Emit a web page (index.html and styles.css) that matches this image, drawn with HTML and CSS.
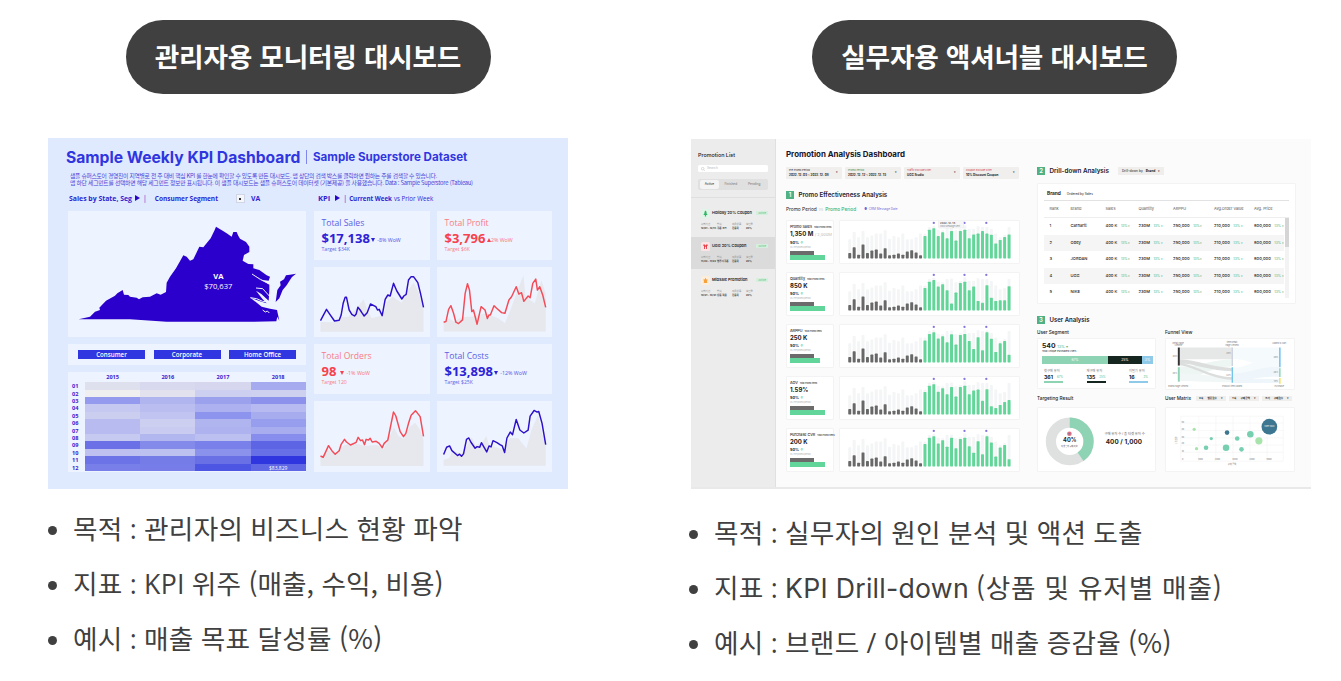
FILE: index.html
```html
<!DOCTYPE html>
<html lang="ko">
<head>
  <meta charset="UTF-8" />
  <title>대시보드 유형</title>
  <link rel="stylesheet" href="styles.css">
</head>
<body>

  <section class="column monitor">
    <h2 class="pill">관리자용 모니터링 대시보드</h2>

    <div class="weekly">
      <div class="weekly-title"><b>Sample Weekly KPI Dashboard</b><i></i><strong>Sample Superstore Dataset</strong></div>
      <div class="weekly-desc">
        <p class="d1">샘플 슈퍼스토어 경영진이 지역별로 전 주 대비 핵심 KPI 를 한눈에 확인할 수 있도록 만든 대시보드. 맵 상단의 검색 박스를 클릭하면 원하는 주를 검색할 수 있습니다.</p>
        <p class="d2">맵 하단 세그먼트를 선택하면 해당 세그먼트 정보만 표시됩니다. 이 샘플 대시보드는 샘플 슈퍼스토어 데이터셋 (기본제공) 을 사용했습니다. Data : Sample Superstore (Tableau)</p>
      </div>
      <div class="weekly-labels">
        <div class="label-left"><b>Sales by State, Seg</b><span class="play"></span><span class="bar">|</span><b class="seg">Consumer Segment</b><span class="drop"></span><b>VA</b></div>
        <div class="label-right"><b class="kpi">KPI</b><span class="play"></span><span class="bar">|</span><b class="cw">Current Week</b><span class="pw">vs Prior Week</span></div>
      </div>

      <div class="weekly-body">
        <div class="stack">
          <div class="tile map">
            <svg viewBox="84 243 714 378">
              <path fill="#2b00cc" d="M116 568L150 560L165 545L180 540L178 533L198 512L225 497L232 490L248 480L252 494L265 495L270 500L290 503L297 508L308 502L330 500L350 490L362 494L378 486L380 458L390 440L408 415L422 390L430 376L440 380L450 392L460 388L478 350L490 352L512 325L524 300L528 290L548 302L560 310L575 320L580 306L590 306L594 316L600 326L618 336L628 350L628 366L612 375L608 392L625 402L640 403L640 415L658 420L680 436L690 440L686 452L668 450L636 432L660 446L688 464L688 480L687 497L686 512L664 492L648 482L668 508L680 520L660 514L631 503L665 530L690 536L711 540L718 572L712 560L709 574L640 575L380 575L270 568Z"/>
              <path fill="#2b00cc" d="M768 431L756 441L750 450L740 466L728 480L718 505L707 516L712 480L722 466L720 455L732 448L738 436L750 434Z"/>
              <path d="M668 540L676 546L682 543L688 549M636 432L662 449L686 461M648 474L668 476L688 498M631 503L650 506L668 514L684 516" stroke="#edf3ff" stroke-width="3" fill="none"/>
              <text x="535" y="447" class="map-name">VA</text>
              <text x="535" y="476" class="map-value">$70,637</text>
            </svg>
          </div>
          <div class="tile segments"><span>Consumer</span><span>Corporate</span><span>Home Office</span></div>
          <div class="tile heat" id="heat"></div>
        </div>

        <div class="kpis">
          <div class="tile kpi-card blue">
            <h4>Total Sales</h4>
            <div class="num">$17,138<i class="down"></i><small>-8% WoW</small></div>
            <p>Target $34K</p>
          </div>
          <div class="tile kpi-card red">
            <h4>Total Profit</h4>
            <div class="num">$3,796<i class="up"></i><small>2% WoW</small></div>
            <p>Target $6K</p>
          </div>
          <div class="tile">
            <svg viewBox="27 411 347 210" class="line blue-line">
              <path class="area" d="M46 605V576L88 577L108 562L130 560L155 535L175 508L186 540L200 565L235 555L245 515L262 500L290 518L305 485L325 458L340 485L355 540V605Z"/>
              <polyline points="46,572 64,538 72,550 88,573 102,571 108,555 114,520 120,502 124,502 132,540 140,553 148,558 153,552 158,532 165,540 170,548 177,558 186,548 196,522 212,530 217,540 222,538 231,557 240,508 248,495 255,498 265,460 275,483 290,507 296,498 303,493 310,450 318,440 325,440 338,458 346,490 355,532"/>
            </svg>
          </div>
          <div class="tile">
            <svg viewBox="395 411 347 210" class="line red-line">
              <path class="area" d="M415 605V580L432 566L445 575L470 562L500 560L540 550L580 565L600 580L615 545L640 475L656 435L662 500L690 520L710 450L723 490V605Z"/>
              <polyline points="415,577 422,575 430,538 437,527 445,550 452,577 460,581 472,570 480,490 487,461 493,480 500,545 505,540 516,583 528,530 540,540 547,566 552,555 556,555 567,527 575,535 590,548 600,550 612,510 620,500 634,470 642,492 650,488 657,514 670,498 676,503 684,460 693,447 698,480 705,470 714,495 723,532"/>
            </svg>
          </div>
          <div class="tile kpi-card red">
            <h4>Total Orders</h4>
            <div class="num">98<i class="down gap"></i><small>-1% WoW</small></div>
            <p>Target 120</p>
          </div>
          <div class="tile kpi-card blue">
            <h4>Total Costs</h4>
            <div class="num">$13,898<i class="down"></i><small>-12% WoW</small></div>
            <p>Target $25K</p>
          </div>
          <div class="tile">
            <svg viewBox="27 273 347 213" class="line red-line">
              <path class="area" d="M46 468V440L70 420L88 434L118 405L150 400L180 408L215 405L235 418L250 388L266 352L280 378L296 388L312 352L330 338L345 360L355 390V468Z"/>
              <polyline points="46,438 54,442 70,407 80,422 90,433 102,422 108,403 118,388 124,396 136,405 153,397 159,382 166,392 172,390 178,404 183,388 190,390 195,385 201,396 213,394 222,400 231,413 237,400 248,390 256,350 265,306 272,318 285,365 295,380 302,370 310,340 318,316 331,302 345,320 355,379"/>
            </svg>
          </div>
          <div class="tile">
            <svg viewBox="395 273 347 213" class="line blue-line">
              <path class="area" d="M415 468V450L432 445L440 425L470 430L490 400L500 382L510 405L530 400L544 378L552 405L598 420L615 385L640 385L665 416L680 360L700 315L712 370L723 405V468Z"/>
              <polyline points="415,434 424,412 433,408 440,422 457,437 463,433 469,439 475,432 484,388 491,384 497,396 510,415 516,410 524,412 529,398 545,426 552,408 558,411 564,392 576,398 585,404 592,408 599,428 606,384 616,366 623,374 634,328 645,360 657,369 670,360 676,318 688,301 697,306 702,304 712,340 723,404"/>
            </svg>
          </div>
        </div>
      </div>
    </div>

    <ul class="points">
      <li>목적 : 관리자의 비즈니스 현황 파악</li>
      <li>지표 : KPI 위주 <span class="paren">(매출, 수익, 비용)</span></li>
      <li>예시 : 매출 목표 달성률 <span class="paren rate">(%)</span></li>
    </ul>
  </section>

  <section class="column action">
    <h2 class="pill">실무자용 액셔너블 대시보드</h2>

    <div class="promo">
      <aside>
        <div class="aside-top">
          <h3>Promotion List</h3>
          <div class="search"><svg viewBox="0 0 10 10"><circle cx="4.3" cy="4.3" r="3.3"/><path d="M7 7L9.5 9.5"/></svg>Search</div>
          <div class="tabs"><span class="on">Active</span><span>Finished</span><span>Pending</span></div>
        </div>
        <div class="item">
          <div class="item-head"><svg viewBox="0 0 30 30"><rect width="30" height="30" rx="5" fill="#dff5e6"/><path fill="#35b568" d="M15 5l5 7h-3l5 8h-5v5h-4v-5H8l5-8h-3z"/></svg><b>Holiday 20% Coupon</b><em>Active</em></div>
          <div class="meta"><span>시행기간</span><span>방식</span><span>적용상품</span><span>할인율</span><b>12/01 - 12/15</b><b>쿠폰 코드</b><b>전품목</b><b>20%</b></div>
        </div>
        <div class="item on">
          <div class="item-head"><svg viewBox="0 0 30 30"><rect width="30" height="30" rx="5" fill="#fbe4e4"/><path fill="#e23d48" d="M8 8h5v3h4V8h5v5h-2v10h-3v-7h-4v7h-3V13H8z"/></svg><b>UGG 20% Coupon</b><em>Active</em></div>
          <div class="meta"><span>시행기간</span><span>방식</span><span>적용상품</span><span>할인율</span><b>11/23 - 11/23</b><b>앱푸시쿠폰</b><b>전품목</b><b>20%</b></div>
        </div>
        <div class="item">
          <div class="item-head"><svg viewBox="0 0 30 30"><rect width="30" height="30" rx="5" fill="#fdeedb"/><path fill="#f7a13d" d="M15 6l3 6h5l-3 5 1 6H9l1-6-3-5h5z"/></svg><b>MidSale Promotion</b><em>Active</em></div>
          <div class="meta"><span>시행기간</span><span>방식</span><span>적용상품</span><span>할인율</span><b>10/21 - 10/31</b><b>상품 적용</b><b>전품목</b><b>20%</b></div>
        </div>
      </aside>

      <main>
        <div class="left">
          <h1>Promotion Analysis Dashboard</h1>
          <div class="filters">
            <div><span>Pre Promo Period</span><b>2022. 12. 05 ~ 2022. 12. 08</b></div>
            <div class="g"><span>Promo Period</span><b>2022. 12. 12 ~ 2022. 12. 15</b></div>
            <div class="r"><span>Traffic Exclude Filter</span><b>UGG Studio</b></div>
            <div class="r"><span>Coupon Exclude Filter</span><b>10% Discount Coupon</b></div>
          </div>
          <h2 class="section s1"><i>1</i>Promo Effectiveness Analysis</h2>
          <div class="legend"><span>Promo Period</span><em>vs</em><b>Promo Period</b><small>● &nbsp;CRM Message Date</small></div>
          <div class="effects" id="effects"></div>
        </div>

        <div class="right">
          <div class="drill-head"><h2 class="section s2"><i>2</i>Drill-down Analysis</h2><div class="select">Drill-down by <b>Brand</b> <span>▾</span></div></div>
          <div class="card drill">
            <div class="drill-top"><b>Brand</b><span>Ordered by Sales</span></div>
            <div class="tr th"><span>Rank</span><span>Brand</span><span>Sales</span><span>Quantity</span><span>ARPPU</span><span>Avg.Order Value</span><span>Avg. Price</span></div>
            <div class="table-body">
              <div id="rows"></div>
              <div class="scroll"><i></i></div>
            </div>
          </div>

          <h2 class="section s3"><i>3</i>User Analysis</h2>
          <div class="users">
            <div>
              <h5>User Segment</h5>
              <div class="card seg-card">
                <div class="total">540 <em>13% ▾</em></div>
                <p>Total Unique Purchased Users</p>
                <div class="split"><span>67%</span><span>25%</span><span>3%</span></div>
                <div class="stats">
                  <div><small>첫구매 유저</small><b>361<em>67%</em></b></div>
                  <div><small>재구매 유저</small><b>135<em>25%</em></b></div>
                  <div><small>이탈기 유저</small><b>16<em>3%</em></b></div>
                </div>
              </div>
            </div>
            <div>
              <h5>Funnel View</h5>
              <div class="card">
                <svg viewBox="15 100 390 152" class="funnel">
                  <path fill="#e6e7e7" d="M57 126H216V162H57z"/>
                  <path fill="#edf6f3" d="M57 184C120 184 150 164 216 162V184C150 186 110 220 57 228z"/>
                  <path fill="#f1f7f6" d="M57 205C120 205 160 215 216 218V232C150 232 110 228 57 228z"/>
                  <path fill="#dcdddd" d="M57 162C110 164 150 186 216 188V198C150 196 110 178 57 172zM57 172C110 180 150 214 216 216V224C150 222 110 188 57 180z"/>
                  <path fill="#f5fafd" d="M219 126H360V186C300 186 270 162 219 160zM219 188C270 188 300 150 360 142V186C300 190 270 208 219 210z"/>
                  <path fill="#eef6fb" d="M219 205C270 205 310 180 360 186V216C310 210 270 228 219 222zM219 222C270 220 310 222 360 222V234H219z"/>
                  <path fill="#333" d="M51 126h6v55h-6z"/><path fill="#8fd3b4" d="M51 186h6v44h-6z"/>
                  <path fill="#cdd0de" d="M215 126h4v56h-4z"/><path fill="#6cc4ea" d="M215 186h4v47h-4z"/>
                  <path fill="#5ab8ee" d="M360 126h4v60h-4z"/><path fill="#7fd0ae" d="M360 189h4v27h-4z"/><path fill="#f3dc4e" d="M360 219h4v17h-4z"/>
                  <g class="tiny">
                    <text x="52" y="115">Detail Page</text><text x="52" y="122">Viewed</text><text x="216" y="113">Item Detail</text><text x="216" y="120">Page Viewed</text><text x="360" y="115">Added to Cart</text>
                    <text x="43" y="156">60%</text><text x="42" y="208">40%</text><text x="206" y="147">45%</text><text x="206" y="213">42%</text><text x="350" y="157">46%</text><text x="350" y="204">26%</text><text x="350" y="231">15%</text>
                    <text x="52" y="245">Brand Page Viewed</text><text x="216" y="245">Product Item Added</text><text x="360" y="245">Purchase</text>
                  </g>
                </svg>
              </div>
            </div>
            <div>
              <h5>Targeting Result</h5>
              <div class="card">
                <svg viewBox="39 307 354 192" class="target">
                  <circle cx="135" cy="408" r="57" stroke="#dfe1e1" stroke-width="31" fill="none"/>
                  <circle cx="135" cy="408" r="57" stroke="#8ed3b3" stroke-width="31" fill="none" pathLength="100" stroke-dasharray="40 60" transform="rotate(-90 135 408)"/>
                  <circle cx="134" cy="385" r="7" fill="#e2717f"/><circle cx="134" cy="385" r="3" fill="#6f7fb8"/>
                  <text x="135" y="411" class="pct">40%</text>
                  <text x="134" y="424" class="note">타겟 유저 구매 비율</text>
                  <text x="301" y="388" class="cap" textLength="122">구매 유저 수 / 총 타겟 유저 수</text>
                  <text x="299" y="417" class="big" textLength="110">400 / 1,000</text>
                </svg>
              </div>
            </div>
            <div>
              <h5>User Matrix <span class="first"><b>X축</b><b>방문횟수</b>▾</span><span><b>Y축</b><b>구매금액</b>▾</span><span><b>크기</b><b>구매횟수</b>▾</span></h5>
              <div class="card">
                <svg viewBox="15 307 390 192" class="matrix">
                  <path stroke="#f0f0f0" stroke-width="1.5" fill="none" d="M60 332H372M60 353H372M60 375H372M60 398H372M60 420H372M60 442H372M60 469H372M60 332V469M115 332V469M167 332V469M219 332V469M271 332V469M323 332V469M372 332V469"/>
                  <g fill="#76cfae"><circle cx="137" cy="428" r="7"/><circle cx="153" cy="400" r="5"/><circle cx="198" cy="428" r="10"/><circle cx="232" cy="400" r="7"/><circle cx="245" cy="433" r="7"/><circle cx="272" cy="387" r="10"/></g>
                  <g fill="#a9e3ac"><circle cx="101" cy="372" r="5"/><circle cx="108" cy="431" r="5"/><circle cx="298" cy="407" r="11"/></g>
                  <g fill="#3d7690"><circle cx="201" cy="382" r="7"/><circle cx="330" cy="364" r="24"/></g>
                  <g class="tiny">
                    <text x="66" y="353">50</text><text x="66" y="375">40</text><text x="66" y="397">30</text><text x="66" y="418">20</text><text x="66" y="440">10</text><text x="66" y="465">0</text>
                    <text x="120" y="465">1000</text><text x="172" y="465">2000</text><text x="225" y="465">3000</text><text x="277" y="465">4000</text><text x="329" y="465">5000</text>
                    <text x="216" y="481">구매 금액</text><text transform="translate(48 405) rotate(-90)">방문횟수</text><text x="330" y="366" fill="#fff">User 1024</text>
                  </g>
                </svg>
              </div>
            </div>
          </div>
        </div>
      </main>
    </div>

    <ul class="points">
      <li>목적 : 실무자의 원인 분석 및 액션 도출</li>
      <li>지표 : <span class="latin">KPI Drill-down</span> <span class="paren wide">(상품 및 유저별 매출)</span></li>
      <li>예시 : 브랜드 / 아이템별 매출 증감율 <span class="paren rate">(%)</span></li>
    </ul>
  </section>

  <script src="script.js"></script>
</body>
</html>
```
FILE: styles.css
```css
* {
  box-sizing: border-box;
}
body {
  margin: 0;
  width: 1341px;
  height: 681px;
  overflow: hidden;
  display: flex;
  background: #fff;
  color: #404040;
  font-family: "Open Sans", "Noto Sans CJK KR", sans-serif;
}
h1, h2, h3, h4, h5, p, ul {
  margin: 0;
  padding: 0;
}
i, em {
  font-style: normal;
}
svg {
  display: block;
}
.column {
  padding-top: 20px;
}
.monitor {
  width: 520px;
  margin-left: 48px;
}
.action {
  width: 620px;
  margin-left: 123px;
}
.pill {
  width: 365px;
  height: 74px;
  margin: 0 auto;
  border-radius: 37px;
  background: #404040;
  color: #fff;
  font-family: "Noto Sans CJK KR", sans-serif;
  font-size: 26.67px;
  font-weight: 700;
  letter-spacing: -0.2px;
  line-height: 71px;
  text-align: center;
  white-space: nowrap;
}
.action .pill {
  margin-left: 121px;
}
.points {
  list-style: none;
  font-size: 26.67px;
  letter-spacing: 0.24px;
  line-height: 55px;
}
.points li {
  height: 55px;
  white-space: nowrap;
}
.points li::before {
  content: "";
  display: inline-block;
  width: 9px;
  height: 9px;
  margin-right: 16px;
  border-radius: 50%;
  background: #404040;
  vertical-align: 4px;
}
.monitor .points {
  margin-top: 12px;
}
.action .points {
  margin: 16px 0 0 -2px;
}
.latin {
  font-family: Inter, sans-serif;
  letter-spacing: 0.25px;
  line-height: 1;
}
.paren {
  font-family: "Noto Sans CJK KR", sans-serif;
  letter-spacing: 0;
  line-height: 1;
}
.paren.wide {
  letter-spacing: 0.75px;
}
.paren.rate {
  letter-spacing: 0.4px;
}

/* weekly KPI dashboard */
.weekly {
  height: 351px;
  margin-top: 44px;
  padding: 9px 16px 0 20px;
  background: #e0eaff;
  color: #3036df;
  font-family: "Open Sans", "Noto Sans CJK KR", sans-serif;
  white-space: nowrap;
}
.weekly-title {
  display: flex;
  align-items: center;
  height: 20px;
  margin-left: -2px;
  font-family: Inter, sans-serif;
}
.weekly-title b {
  width: 235px;
  font-size: 15.65px;
}
.weekly-title i {
  width: 1px;
  height: 14px;
  margin: 0 6px 0 5px;
  background: #7f86ee;
}
.weekly-title strong {
  font-size: 11.6px;
}
.weekly-desc {
  margin: 6px 0 0 2px;
  font-family: "Noto Sans CJK KR", sans-serif;
  font-size: 5.8px;
  line-height: 6.7px;
  letter-spacing: -0.29px;
  color: #4a3fd6;
}
.weekly-desc .d2 {
  letter-spacing: -0.24px;
}
.weekly-labels {
  display: flex;
  height: 12px;
  margin: 6px 0 6.6px;
  color: #2f1fd0;
  font-size: 6.9px;
}
.label-left, .label-right {
  display: flex;
  align-items: center;
}
.label-left {
  width: 250px;
  padding-left: 1px;
}
.play {
  margin: 0 3px;
  border-left: 5px solid #2a06c8;
  border-top: 3px solid transparent;
  border-bottom: 3px solid transparent;
}
.seg {
  margin-left: 8px;
  font-size: 6.5px;
}
.drop {
  width: 9px;
  height: 9px;
  margin: 0 6px 0 18px;
  border: 1px solid #d0d6e4;
  background: #f4f6fb;
}
.drop::after {
  content: "";
  display: block;
  margin: 3px auto;
  width: 2px;
  height: 2px;
  background: #333;
}
.label-right .kpi {
  margin-right: 2px;
  font-size: 7.6px;
}
.label-right .cw {
  margin: 0 2px;
  font-size: 6.2px;
}
.label-right .pw {
  font-size: 6.2px;
}
.weekly-body {
  display: grid;
  grid-template-columns: 238px 238px;
  gap: 8px;
}
.tile {
  background: #edf3ff;
}
.stack {
  display: grid;
  grid-template-rows: 126px 21px 100px;
  gap: 7px;
}
.kpis {
  display: grid;
  grid-template-columns: 116px 115px;
  grid-template-rows: 49px 70px 50px 71px;
  gap: 7px;
}
.kpis svg {
  width: 100%;
  height: 100%;
}
.map-name, .map-value {
  fill: #fff;
  font-size: 23px;
  text-anchor: middle;
}
.map-name {
  font-weight: 700;
}
.segments {
  display: grid;
  grid-template-columns: repeat(3, 67px);
  gap: 8.5px;
  padding: 6px 10px;
}
.segments span {
  height: 9px;
  background: #3036e0;
  color: #fff;
  font-size: 6.2px;
  font-weight: 600;
  line-height: 9px;
  text-align: center;
}
.heat {
  display: grid;
  grid-template-columns: 17px repeat(4, 55.2px);
  grid-template-rows: 10.3px repeat(12, 7.4px);
  font-size: 5.6px;
  font-weight: 700;
  line-height: 8px;
  color: #3f22cf;
  text-align: center;
}
.heat .month {
  text-align: left;
  padding-left: 4px;
}
.heat .head {
  line-height: 11px;
}
.heat .tag {
  color: #fff;
  font-size: 5px;
  font-weight: 400;
}
.kpi-card {
  padding: 7px 0 0 7.5px;
}
.kpi-card h4 {
  font-size: 8.6px;
  font-weight: 400;
  line-height: 11px;
}
.kpi-card .num {
  display: flex;
  align-items: center;
  height: 17px;
  font-family: "Noto Sans", sans-serif;
  font-size: 13px;
  font-weight: 700;
}
.kpi-card small {
  margin-top: 5px;
  font-size: 5.3px;
  font-weight: 400;
}
.kpi-card p {
  font-size: 5.1px;
  line-height: 6px;
}
.kpi-card i {
  margin: 4px 2px 0 1.5px;
  border-left: 2.2px solid transparent;
  border-right: 2.2px solid transparent;
}
.kpi-card .down {
  border-top: 4px solid;
}
.kpi-card .up {
  border-bottom: 4px solid;
  margin-right: 0;
}
.kpi-card .gap {
  margin-left: 4px;
}
.blue .num {
  color: #2d22d6;
}
.blue h4, .blue small, .blue p {
  color: #5b5fe6;
}
.red .num {
  color: #f7414c;
}
.red h4, .red small, .red p {
  color: #f97c84;
}
.line polyline {
  fill: none;
  stroke-width: 4.4;
  stroke-linejoin: round;
}
.line .area {
  fill: #e6e8ed;
}
.blue-line polyline {
  stroke: #2c0fc8;
}
.red-line polyline {
  stroke: #f34b57;
}

/* promotion dashboard */
.promo {
  display: flex;
  height: 350px;
  margin-top: 45px;
  border-bottom: 2px solid #e9e9e9;
  background: #fbfbfb;
  color: #222;
  font-family: Inter, "Noto Sans CJK KR", sans-serif;
  line-height: 1;
  white-space: nowrap;
}
aside {
  width: 85px;
  background: #ececec;
  border-right: 1px solid #e0e0e0;
}
.aside-top {
  height: 59px;
  padding: 13px 7px 0;
  border-bottom: 1px solid #dfdfdf;
}
aside h3 {
  font-size: 5.4px;
  font-weight: 500;
  line-height: 6px;
}
.search {
  display: flex;
  align-items: center;
  height: 7px;
  margin-top: 7px;
  padding-left: 3px;
  border-radius: 1.5px;
  background: #fff;
  color: #bbb;
  font-size: 3.3px;
}
.search svg {
  width: 4px;
  margin-right: 2px;
  fill: none;
  stroke: #aaa;
}
.tabs {
  display: grid;
  grid-template-columns: 19px 1fr 1fr;
  height: 11px;
  margin-top: 7px;
  padding: 1px 2px;
  border-radius: 2px;
  background: #e0e0e0;
  color: #777;
  font-size: 3.2px;
  line-height: 9px;
  text-align: center;
}
.tabs .on {
  border-radius: 2px;
  background: #f4f4f4;
  color: #222;
}
.item {
  height: 39px;
  padding: 10px 7px 0 10px;
}
.item.on {
  height: 32px;
  padding-top: 4px;
  background: #dbdbdb;
}
.item.on + .item {
  padding-top: 6px;
}
.item-head {
  display: flex;
  align-items: center;
  height: 10px;
}
.item-head svg {
  width: 9px;
  margin-right: 2px;
}
.item-head b {
  font-size: 3.9px;
  font-weight: 600;
}
.item-head em {
  margin-left: auto;
  padding: 0.5px 2px;
  background: #d4efdd;
  color: #4fbb7e;
  font-size: 2.6px;
}
.meta {
  display: grid;
  grid-template-columns: 16px 15px 14px 15px;
  row-gap: 1px;
  padding-top: 5px;
  color: #888;
  font-size: 2.5px;
  line-height: 3px;
}
.meta b {
  color: #333;
}
main {
  display: flex;
  padding-left: 10px;
}
.left {
  width: 234px;
  padding-top: 10px;
}
h1 {
  font-size: 7.9px;
  font-weight: 700;
  line-height: 11px;
  color: #17142b;
}
.filters {
  display: grid;
  grid-template-columns: repeat(4, 56px);
  gap: 3px;
  margin-top: 7px;
}
.filters div {
  position: relative;
  height: 12px;
  padding: 2px 3px;
  border-radius: 1px;
  background: #f0efed;
}
.filters div::after {
  content: "▾";
  position: absolute;
  right: 4px;
  top: 4px;
  color: #222;
  font-size: 3px;
}
.filters span, .filters b {
  display: block;
  font-size: 2.5px;
  line-height: 4px;
}
.filters b {
  font-size: 3px;
}
.filters .g span {
  color: #2c8a52;
}
.filters .r span {
  color: #d23b3b;
}
.section {
  display: flex;
  align-items: center;
  height: 8px;
  font-size: 6.2px;
  font-weight: 600;
  color: #23202f;
}
.section i {
  width: 8px;
  height: 8px;
  margin-right: 4.5px;
  background: #50b184;
  color: #fff;
  font-size: 6px;
  line-height: 8px;
  text-align: center;
}
.s1 {
  margin-top: 12px;
}
.legend {
  display: flex;
  align-items: center;
  height: 8px;
  margin-top: 6.5px;
  font-size: 4.8px;
}
.legend em {
  margin: 0 2px;
  color: #ccc;
  font-size: 4px;
}
.legend b {
  color: #3cb371;
  font-weight: 500;
}
.legend small {
  margin-left: 8px;
  color: #7468d8;
  font-size: 3.1px;
}
.effects {
  display: grid;
  grid-template-columns: 48px 181px;
  grid-auto-rows: 44px;
  gap: 8px 5px;
  margin-top: 6.5px;
}
.card, .effects > div {
  border: 1px solid #f3f3f3;
  border-radius: 1px;
  background: #fff;
}
.effects svg {
  width: 100%;
  height: 100%;
}
.effect {
  padding: 3.5px 3px 0;
}
.effect h6 {
  margin: 0;
  font-size: 3.7px;
  font-weight: 500;
  line-height: 4px;
}
.effect h6 small {
  margin-left: 2px;
  font-size: 2px;
}
.effect strong {
  display: block;
  font-size: 6px;
  line-height: 10px;
}
.effect strong small {
  color: #bbb;
  font-size: 4px;
  font-weight: 400;
}
.effect b {
  display: block;
  font-size: 3.9px;
  line-height: 5px;
}
.effect b em {
  color: #55c98d;
}
.effect p {
  color: #aaa;
  font-size: 2.1px;
  line-height: 5px;
}
.effect .before, .effect .after {
  display: block;
  width: 24px;
  height: 4.5px;
  margin-top: 1px;
  background: #6b6b6b;
}
.effect .after {
  width: 35px;
  margin-top: 0;
  background: #62d59a;
}
.effect.short .after {
  width: 30px;
}
.right {
  width: 259px;
  margin-left: 17px;
  padding-top: 28px;
}
.drill-head {
  display: flex;
  gap: 9px;
}
.s2 {
  font-size: 6.3px;
}
.select {
  height: 8px;
  padding: 0 4px;
  background: #efeeec;
  font-size: 3.3px;
  line-height: 8px;
}
.select b {
  margin: 0 2px;
}
.drill {
  height: 121px;
  margin-top: 8px;
  padding: 4px 6px;
}
.drill-top {
  height: 13px;
  padding: 3px 3px 0;
  border-bottom: 1px solid #e2e2e2;
  font-size: 4.8px;
}
.drill-top span {
  margin-left: 6px;
  font-size: 3.2px;
}
.tr {
  display: grid;
  grid-template-columns: 21px 35px 33px 34.5px 41px 40px 31px;
  height: 16.4px;
  padding-left: 5.5px;
  font-size: 4.1px;
  font-weight: 500;
  line-height: 16.4px;
}
.tr:nth-child(even) {
  background: #f5f5f5;
}
.tr em {
  margin-left: 3.5px;
  color: #55b988;
  font-size: 3.2px;
}
.tr.th {
  background: none;
  color: #555;
  font-size: 3.9px;
  font-weight: 400;
}
.table-body {
  display: flex;
  border-top: 1px solid #eee;
}
#rows {
  width: 240px;
}
.scroll {
  width: 4px;
  height: 80px;
  margin-left: 1px;
  background: #f3f3f3;
}
.scroll i {
  display: block;
  height: 29px;
  background: #d5d5d5;
}
.s3 {
  margin: 12px 0 5px;
  font-size: 6px;
}
.users {
  display: grid;
  grid-template-columns: 119px 130px;
  grid-template-rows: 58.5px 74px;
  gap: 8px 9px;
}
.users h5 {
  display: flex;
  align-items: center;
  gap: 3px;
  height: 6px;
  margin-bottom: 3px;
  font-size: 4.7px;
  font-weight: 500;
}
.users h5 span {
  display: flex;
  justify-content: space-between;
  width: 30px;
  padding: 0 3px;
  background: #efeeec;
  font-size: 2.6px;
  line-height: 5px;
}
.users h5 .first {
  margin-left: 2px;
}
.users > div:nth-child(n+3) h5 {
  margin-bottom: 5px;
}
.funnel, .matrix {
  width: 128px;
}
.target {
  width: 117px;
}
.tiny {
  font-size: 6.5px;
  fill: #777;
  text-anchor: middle;
}
.target text {
  text-anchor: middle;
  fill: #222;
}
.target .pct {
  font-size: 17px;
  font-weight: 700;
}
.target .note {
  font-size: 6px;
}
.target .cap {
  font-size: 10px;
  fill: #666;
}
.target .big {
  font-size: 19px;
  font-weight: 700;
}
.seg-card {
  height: 51px;
  padding: 3px 3px 0 4px;
}
.total {
  font-size: 6.8px;
  font-weight: 700;
  line-height: 7px;
}
.total em {
  color: #55b988;
  font-size: 3.8px;
  font-weight: 400;
}
.seg-card p {
  font-size: 2.4px;
  line-height: 4px;
}
.split {
  display: grid;
  grid-template-columns: 66px 34px 11px;
  margin-top: 2px;
  color: #fff;
  font-size: 3.3px;
  line-height: 8px;
  text-align: center;
}
.split span {
  background: #8ed3b3;
}
.split span:nth-child(2) {
  background: #15251f;
}
.split span:nth-child(3) {
  background: #8fcbe8;
}
.stats {
  display: grid;
  grid-template-columns: repeat(3, 19px);
  gap: 23.5px;
  padding: 5px 0 0 2px;
}
.stats small {
  display: block;
  color: #777;
  font-size: 3.2px;
  line-height: 5px;
}
.stats b {
  display: flex;
  justify-content: space-between;
  align-items: center;
  height: 9px;
  border-bottom: 2px solid #8ed3b3;
  font-size: 5.2px;
}
.stats em {
  color: #55b988;
  font-size: 2.8px;
  font-weight: 400;
}
.stats div:nth-child(2) b {
  border-color: #15251f;
}
.stats div:nth-child(3) b {
  border-color: #8fcbe8;
}
```
FILE: script.js
```js
// heatmap: 2015 - 2018 by month
const months = [
  ["#dfe0ee", "#d8d9ee", "#d6d7ef", "#a6abef"],
  ["#efefef", "#e1e2ee", "#cccff0", "#ced0f0"],
  ["#949bee", "#b0b4ef", "#9ba1ed", "#8c92eb"],
  ["#c5c8f0", "#b9bdf0", "#adb1ef", "#b6baf0"],
  ["#cccef0", "#c1c4f1", "#8c94ed", "#a7acef"],
  ["#b7bbf0", "#cdcff0", "#b0b4ef", "#979eee"],
  ["#b8bbf0", "#c9ccf0", "#aeb3ef", "#a8adef"],
  ["#c7caf0", "#b3b7f0", "#bcc0f0", "#868dec"],
  ["#6b70e6", "#848aea", "#7980e9", "#5d65e5"],
  ["#bec1f0", "#bdc1f0", "#8b92ec", "#6870e7"],
  ["#6c73e7", "#757ce8", "#6970e6", "#3036df"],
  ["#787fe9", "#767de8", "#4d55e3", "#6067e5"]
];

const heat = document.getElementById("heat");
heat.innerHTML = '<span></span>' + [2015, 2016, 2017, 2018].map(y => `<span class="head">${y}</span>`).join("");
months.forEach((row, m) => {
  heat.innerHTML += `<span class="month">${String(m + 1).padStart(2, "0")}</span>` +
    row.map((c, i) => `<span class="tag" style="background:${c}">${m === 11 && i === 3 ? "$83,829" : ""}</span>`).join("");
});

// promo effectiveness rows
const before = [17, 35, 12, 44, 17, 25, 28, 16, 32, 10, 12, 16, 12, 22, 26, 19, 10];
const track = [60, 83, 66, 86, 66, 72, 78, 78, 88, 62, 70, 66, 78, 60, 60, 66, 78];
const trackGreen = [78, 98, 102, 90, 88, 98, 100, 88, 92, 104, 92, 92, 101, 98, 98, 92, 78, 66, 70, 98];
const effects = [
  ["Promo Sales", "1,350 M", [70, 90, 94, 70, 82, 63, 86, 56, 86, 90, 63, 75, 78, 86, 78, 74, 47, 58, 67, 75]],
  ["Quantity", "850 K", [70, 90, 95, 75, 82, 63, 22, 56, 86, 90, 63, 75, 30, 24, 79, 40, 30, 32, 32, 76]],
  ["ARPPU", "250 K", [69, 89, 94, 75, 82, 63, 88, 56, 86, 89, 67, 42, 79, 38, 94, 74, 33, 60, 67, 24]],
  ["AOV", "1.59%", [70, 90, 94, 71, 82, 63, 86, 56, 86, 90, 63, 75, 78, 43, 79, 26, 20, 30, 39, 45]],
  ["Purchase CVR", "200 K", [70, 90, 94, 72, 82, 62, 90, 57, 86, 90, 63, 43, 79, 38, 94, 75, 31, 59, 67, 23]]
];

function bar(i, h, color) {
  return `<rect x="${25 + i * 13.4}" y="${117 - h}" width="9" height="${h}" rx="2" fill="${color}"/>`;
}

document.getElementById("effects").innerHTML = effects.map(([name, value, after], n) => {
  let bars = "";
  before.forEach((h, i) => bars += bar(i, track[i], "#f4f5f6") + bar(i, h, "#686868"));
  after.forEach((h, i) => bars += bar(i + 17, Math.max(h + 6, trackGreen[i]), "#f4f5f6") + bar(i + 17, h, "#62d598"));
  [284, 377, 443].forEach(x => bars += `<circle cx="${x}" cy="6" r="3.5" fill="#8478df"/>`);
  if (n === 0) {
    bars += '<rect x="298" y="-4" width="76" height="26" rx="3" fill="#f7f7f7" stroke="#ddd"/>' +
      '<text x="303" y="10" font-size="8" font-weight="600" fill="#444">2022. 12. 14</text><text x="303" y="18" font-size="6.5" fill="#888">CRM Message Sent</text>';
  }
  return `<div class="effect ${n === 2 ? "short" : ""}">
    <h6>${name}<small>Total Promo Items</small></h6>
    <strong>${value}${n === 0 ? " <small>/ 2,000M</small>" : ""}</strong>
    <b>50% <em>↑</em></b><p>vs. Pre promo period</p>
    <span class="before"></span><span class="after"></span>
  </div><div><svg viewBox="0 0 542 131" preserveAspectRatio="none">${bars}</svg></div>`;
}).join("");

// drill-down table
const pct = "<em>13% ▾</em>";
document.getElementById("rows").innerHTML = ["Carhartt", "Obey", "JORDAN", "UGG", "NIKE"].map((brand, i) =>
  `<div class="tr"><span>${i + 1}</span><span>${brand}</span><span>400 K${pct}</span><span>230M${pct}</span><span>250,000${pct}</span><span>210,000${pct}</span><span>800,000${pct}</span></div>`
).join("");
```
